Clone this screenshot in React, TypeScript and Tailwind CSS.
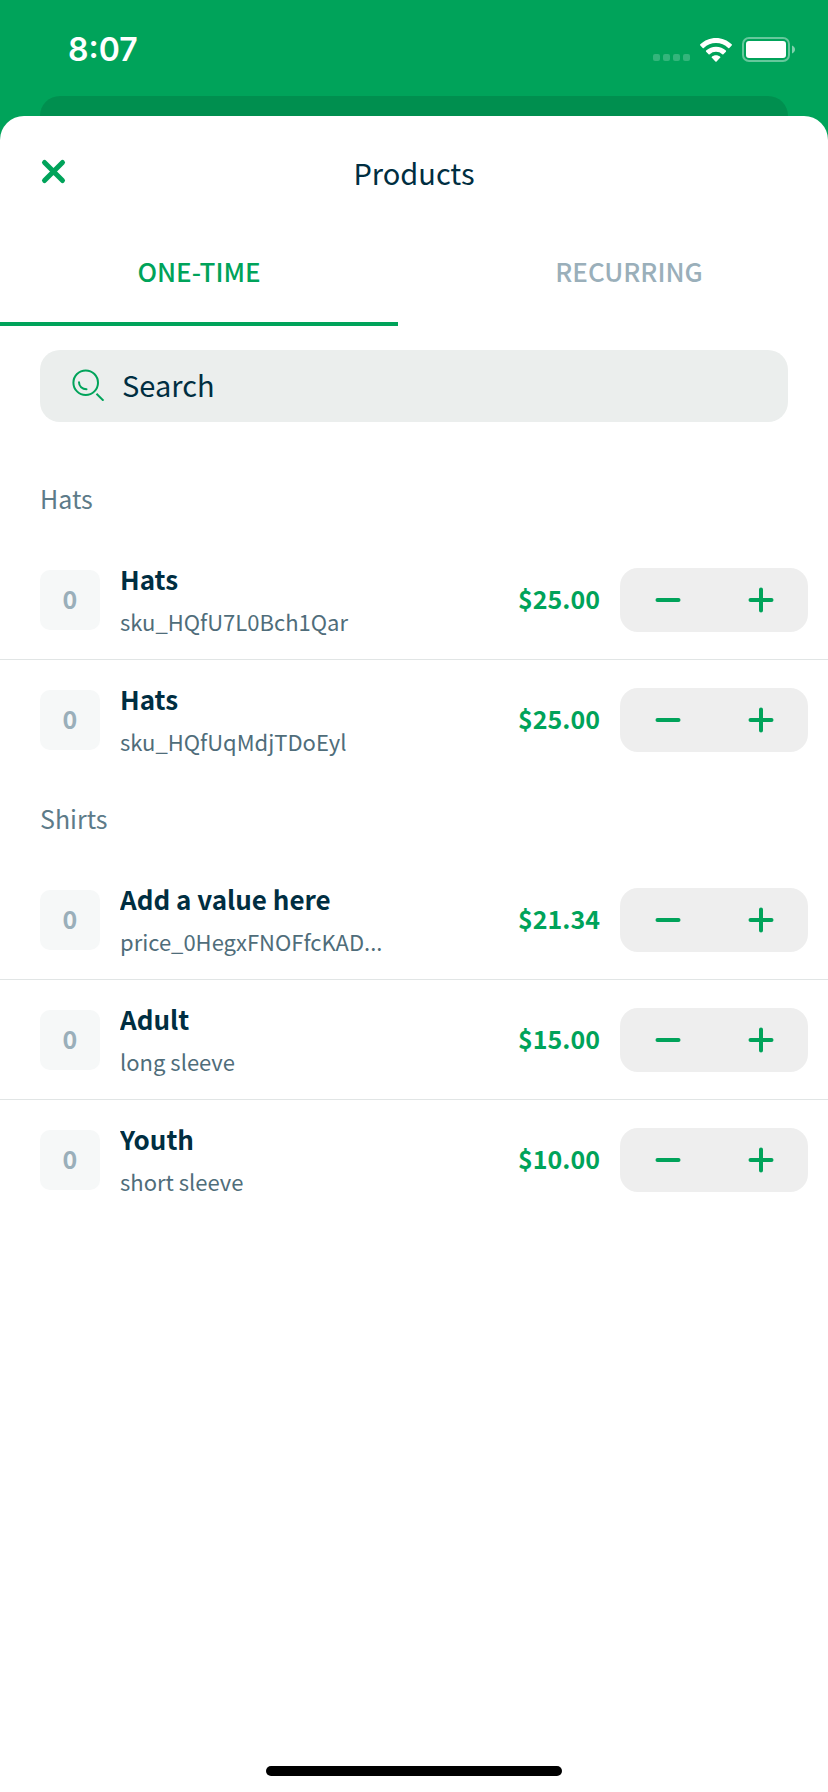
import { useState } from 'react';

type Product = {
  id: string;
  name: string;
  detail: string;
  price: string;
};

type ProductGroup = {
  title: string;
  products: Product[];
};

const groups: ProductGroup[] = [
  {
    title: 'Hats',
    products: [
      { id: 'hat-1', name: 'Hats', detail: 'sku_HQfU7L0Bch1Qar', price: '$25.00' },
      { id: 'hat-2', name: 'Hats', detail: 'sku_HQfUqMdjTDoEyl', price: '$25.00' },
    ],
  },
  {
    title: 'Shirts',
    products: [
      { id: 'shirt-1', name: 'Add a value here', detail: 'price_0HegxFNOFfcKAD...', price: '$21.34' },
      { id: 'shirt-2', name: 'Adult', detail: 'long sleeve', price: '$15.00' },
      { id: 'shirt-3', name: 'Youth', detail: 'short sleeve', price: '$10.00' },
    ],
  },
];

function StatusBar() {
  return (
    <div className="flex h-24 items-center justify-between pl-[68px] pr-8 pt-1">
      <span className="font-['Inter',sans-serif] text-[32px] font-semibold leading-10 text-white">8:07</span>
      <div className="flex items-center gap-2">
        <svg className="h-6 w-10" viewBox="0 0 40 24" fill="white" fillOpacity="0.2">
          <rect x="1" y="16" width="7" height="7" rx="2" />
          <rect x="11" y="16" width="7" height="7" rx="2" />
          <rect x="21" y="16" width="7" height="7" rx="2" />
          <rect x="31" y="16" width="7" height="7" rx="2" />
        </svg>
        <svg className="h-6 w-8" viewBox="0 0 32 24" fill="white">
          <path d="M16 0C22 0 27.600 2.300 31.700 6.300a.8.8 0 0 1 0 1.100L29.300 9.900a.8.8 0 0 1-1.100 0A17.500 17.500 0 0 0 3.800 9.900a.8.8 0 0 1-1.100 0L.3 7.400a.8.8 0 0 1 0-1.100C4.400 2.300 10 0 16 0Z" />
          <path d="M16 8.700c3.800 0 7.300 1.500 9.900 3.900a.8.8 0 0 1 0 1.100l-2.500 2.500a.8.8 0 0 1-1.100 0 9.200 9.200 0 0 0-12.600 0 .8.8 0 0 1-1.100 0l-2.500-2.500a.8.8 0 0 1 0-1.100A14.500 14.500 0 0 1 16 8.700Z" />
          <path d="M16 17.200c1.600 0 3 .5 4.100 1.500a.7.7 0 0 1 0 1.100l-3.500 3.700a.8.8 0 0 1-1.200 0l-3.500-3.700a.7.7 0 0 1 0-1.100c1.100-1 2.500-1.500 4.100-1.500Z" />
        </svg>
        <svg className="h-[26px] w-[56px]" viewBox="0 0 56 26">
          <rect x="3" y="1" width="46" height="23" rx="6" fill="none" stroke="white" strokeOpacity="0.4" strokeWidth="2" />
          <rect x="6" y="4" width="40" height="17" rx="3" fill="white" />
          <path d="M52 8.500c2 .8 3 2.400 3 4s-1 3.200-3 4V8.500Z" fill="white" fillOpacity="0.5" />
        </svg>
      </div>
    </div>
  );
}

function ProductRow({ product }: { product: Product }) {
  const [quantity, setQuantity] = useState(0);

  return (
    <li className="flex h-[120px] items-center border-b border-[#e1e5e5] pl-10 pr-5 last:border-b-0">
      <span className="flex size-[60px] shrink-0 items-center justify-center rounded-[10px] bg-[#f6f8f8] pb-1 text-[25px] font-bold leading-10 text-[#9aafba]">
        {quantity}
      </span>
      <div className="min-w-0 flex-1 pl-5">
        <p className="truncate text-[26px] font-bold leading-10 text-[#002e41]">{product.name}</p>
        <p className="mt-0.5 truncate text-[22px] leading-10 text-[#4f6d7a]">{product.detail}</p>
      </div>
      <span className="pb-1 text-[25px] font-bold leading-10 text-[#00a35a]">{product.price}</span>
      <div className="ml-5 flex h-16 w-[188px] shrink-0 rounded-[18px] bg-[#eeeeee] text-[#00a35a]">
        <button
          type="button"
          aria-label={`Remove one ${product.name}`}
          className="flex flex-1 items-center justify-center"
          onClick={() => setQuantity((q) => Math.max(0, q - 1))}
        >
          <svg className="h-7 w-7" viewBox="0 0 28 28" stroke="currentColor" strokeWidth="4" strokeLinecap="round">
            <path d="M4.500 14h21" />
          </svg>
        </button>
        <button
          type="button"
          aria-label={`Add one ${product.name}`}
          className="flex flex-1 items-center justify-center"
          onClick={() => setQuantity((q) => q + 1)}
        >
          <svg className="h-7 w-7" viewBox="0 0 28 28" stroke="currentColor" strokeWidth="4" strokeLinecap="round">
            <path d="M3.500 14h21M14 3.500v21" />
          </svg>
        </button>
      </div>
    </li>
  );
}

export default function App() {
  const [tab, setTab] = useState('one-time');

  return (
    <div className="flex min-h-screen flex-col bg-[#00a35a] font-['Noto_Sans_CJK_JP',sans-serif]">
      <StatusBar />
      {/* Edge of the screen behind the sheet */}
      <div className="mx-10 h-5 rounded-t-[20px] bg-[#008f4f]" />

      <main className="flex flex-1 flex-col rounded-t-[24px] bg-white">
        <header className="grid h-28 grid-cols-[1fr_auto_1fr] items-center px-10">
          <button type="button" aria-label="Close" className="flex size-7 items-center text-[#00a35a]">
            <svg className="size-7" viewBox="0 0 28 28" stroke="currentColor" strokeWidth="5" strokeLinecap="round">
              <path d="M4.500 4.500l18 18M22.500 4.500l-18 18" />
            </svg>
          </button>
          <h1 className="text-[29px] leading-10 text-[#002e41]">Products</h1>
        </header>

        <div role="tablist" className="flex h-[98px] gap-8 text-[26px] leading-10">
          <button
            type="button"
            role="tab"
            aria-selected={tab === 'one-time'}
            className="flex-1 border-b-4 border-transparent pb-2 font-medium text-[#9aafba] aria-selected:border-[#00a35a] aria-selected:text-[#00a35a]"
            onClick={() => setTab('one-time')}
          >
            ONE-TIME
          </button>
          <button
            type="button"
            role="tab"
            aria-selected={tab === 'recurring'}
            className="flex-1 border-b-4 border-transparent pb-2 font-medium text-[#9aafba] aria-selected:border-[#00a35a] aria-selected:text-[#00a35a]"
            onClick={() => setTab('recurring')}
          >
            RECURRING
          </button>
        </div>

        <label className="mx-10 mt-6 flex h-[72px] items-center gap-4 rounded-[20px] bg-[#ebeeed] px-8 pb-1">
          <svg className="size-[34px] shrink-0" viewBox="0 0 34 34" fill="none" stroke="#00a35a" strokeWidth="2">
            <circle cx="13.700" cy="15.700" r="12.300" />
            <path d="M7 15.200c0 4 3.200 7 7.500 7" strokeLinecap="round" />
            <path d="M24.500 26.700l7 7" />
          </svg>
          <input
            type="search"
            aria-label="Search"
            placeholder="Search"
            className="min-w-0 flex-1 bg-transparent text-[29px] leading-10 text-[#002e41] outline-none placeholder:text-[#002e41]"
          />
        </label>

        <div className="flex-1 pt-[38px]">
          {groups.map((group) => (
            <section key={group.title}>
              <h2 className="flex h-20 items-center px-10 pb-1 text-[25px] leading-10 text-[#5d7b89]">{group.title}</h2>
              <ul>
                {group.products.map((product) => (
                  <ProductRow key={product.id} product={product} />
                ))}
              </ul>
            </section>
          ))}
        </div>

        {/* Home indicator */}
        <div className="mx-auto mb-4 h-[10px] w-[296px] rounded-full bg-black" />
      </main>
    </div>
  );
}
